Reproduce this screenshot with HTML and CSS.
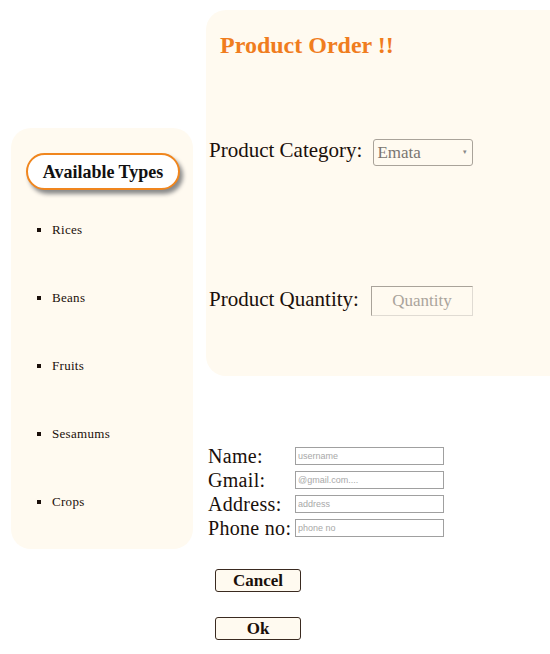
FILE: index.html
```html
<!DOCTYPE html>
<html>
<head>
<meta charset="utf-8">
<link rel="stylesheet" href="styles.css">
</head>
<body>
<div class="page">
  <aside class="sidebar">
    <div class="pill">Available Types</div>
    <ul class="types">
      <li>Rices</li>
      <li>Beans</li>
      <li>Fruits</li>
      <li>Sesamums</li>
      <li>Crops</li>
    </ul>
  </aside>
  <main class="main">
    <section class="panel">
      <h1 class="title">Product Order !!</h1>
      <div class="field cat">
        <span class="label">Product Category:</span>
        <span class="select">Emata<span class="arrow">&#9662;</span></span>
      </div>
      <div class="field qty">
        <span class="label">Product Quantity:</span>
        <span class="qinput">Quantity</span>
      </div>
    </section>
    <form class="form">
      <div class="grid">
        <span class="flabel">Name:</span><input class="finput" placeholder="username">
        <span class="flabel">Gmail:</span><input class="finput" placeholder="@gmail.com....">
        <span class="flabel">Address:</span><input class="finput" placeholder="address">
        <span class="flabel">Phone no:</span><input class="finput" placeholder="phone no">
      </div>
      <div class="buttons">
        <button type="button" class="btn">Cancel</button>
        <button type="button" class="btn">Ok</button>
      </div>
    </form>
  </main>
</div>
</body>
</html>
```
FILE: styles.css
```css
html, body { margin: 0; padding: 0; background: #fff; overflow: hidden; }
body { font-family: "Liberation Serif", "DejaVu Serif", serif; color: #1a0f0a; }
.page { display: flex; align-items: flex-start; padding-left: 11px; gap: 13px; }
.sidebar {
  width: 182px; margin-top: 128px; height: 421px; box-sizing: border-box;
  background: #fffaf0; border-radius: 20px; padding-top: 25px;
}
.pill {
  margin-left: 15px; width: 154px; height: 37px; box-sizing: border-box;
  border: 2px solid #f0861e; border-radius: 20px; background: #fff;
  box-shadow: 3px 4px 4px #8a8a8a;
  font-weight: bold; font-size: 18px; text-align: center; line-height: 34px;
  color: #111;
}
.types { list-style: square; margin: 0; padding: 0 0 0 41px; margin-top: 31px; font-size: 13px; }
.types li { height: 68px; line-height: 18px; padding-left: 0; letter-spacing: 0.3px; }
.main { flex: 1; display: flex; flex-direction: column; }
.panel {
  margin-top: 10px; height: 366px; box-sizing: border-box;
  background: #fffaf0; border-radius: 20px 0 0 20px; padding: 21px 0 0 14px;
}
.title { margin: 0; font-size: 24px; color: #f07d1e; font-weight: bold; line-height: 28px; }
.field { display: flex; align-items: flex-start; margin-left: -11px; }
.cat { margin-top: 78px; }
.qty { margin-top: 118px; }
.label { font-size: 21px; }
.cat .label { margin-right: 11px; line-height: 26px; }
.qty .label { margin-right: 12px; line-height: 30px; }
.select {
  width: 100px; height: 27px; box-sizing: border-box; border: 1px solid #a9a39a;
  border-radius: 3px; font-size: 17px; color: #7a7570; padding-left: 3px; line-height: 25px;
  display: flex; justify-content: space-between; background: #fffaf0; margin-top: 2px;
}
.arrow { font-size: 7px; color: #888; margin-right: 6px; }
.qinput {
  width: 102px; height: 30px; box-sizing: border-box; border: 1px solid #e0dbd3;
  border-top-color: #a9a39a; border-left-color: #a9a39a;
  font-size: 17px; color: #aaa49c; text-align: center; line-height: 28px; margin-top: 2px;
}
.form { margin: 71px 0 0 2px; }
.grid { display: grid; grid-template-columns: 87px 149px; row-gap: 6px; align-items: center; }
.flabel { font-size: 20px; line-height: 18px; letter-spacing: 0.3px; }
.finput {
  height: 18px; box-sizing: border-box; border: 1px solid #a0a0a0; padding: 0 2px; margin: 0;
  font-family: "Liberation Sans", Arial, sans-serif; font-size: 9px; background: #fff;
}
.finput::placeholder { color: #a8a8a8; }
.buttons { display: flex; flex-direction: column; gap: 25px; margin: 32px 0 0 7px; }
.btn {
  width: 86px; height: 23px; border: 1px solid #3a2a20; border-radius: 3px;
  background: #fffaf0; font-family: inherit; font-weight: bold; font-size: 17px; color: #1a0f0a;
  padding: 0; line-height: 20px;
}
```
